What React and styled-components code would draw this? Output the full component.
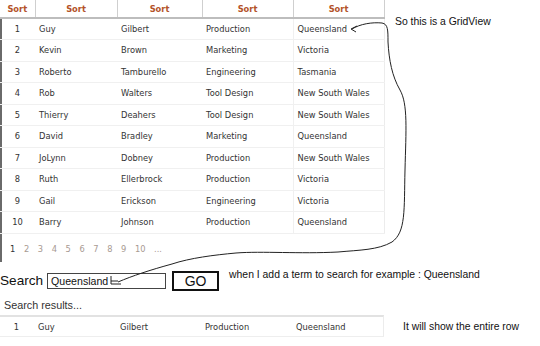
import styled, { createGlobalStyle } from "styled-components"

const GlobalStyle = createGlobalStyle`
  html, body {
    margin: 0;
    padding: 0;
    background: #fff;
  }
`

const people = [
  [1, "Guy", "Gilbert", "Production", "Queensland"],
  [2, "Kevin", "Brown", "Marketing", "Victoria"],
  [3, "Roberto", "Tamburello", "Engineering", "Tasmania"],
  [4, "Rob", "Walters", "Tool Design", "New South Wales"],
  [5, "Thierry", "Deahers", "Tool Design", "New South Wales"],
  [6, "David", "Bradley", "Marketing", "Queensland"],
  [7, "JoLynn", "Dobney", "Production", "New South Wales"],
  [8, "Ruth", "Ellerbrock", "Production", "Victoria"],
  [9, "Gail", "Erickson", "Engineering", "Victoria"],
  [10, "Barry", "Johnson", "Production", "Queensland"],
]

const colWidths = [35, 82, 85, 91, 91]

const App = () => {
  return (
    <Page>
      <GlobalStyle />
      <Top>
        <GridWrap>
          <Grid>
            <colgroup>
              {colWidths.map((w, i) => <col key={i} style={{ width: w }} />)}
            </colgroup>
            <thead>
              <tr>
                {colWidths.map((_, i) => <Th key={i}>Sort</Th>)}
              </tr>
            </thead>
            <tbody>
              {people.map(row => (
                <Row key={row[0]}>
                  {row.map((cell, i) => <Td key={i} $num={i === 0}>{cell}</Td>)}
                </Row>
              ))}
              <PagerRow>
                <td colSpan={5}>
                  <Pager>
                    {["1", "2", "3", "4", "5", "6", "7", "8", "9", "10", "..."].map((p, i) => (
                      <PageLink key={p} $current={i === 0}>{p}</PageLink>
                    ))}
                  </Pager>
                </td>
              </PagerRow>
            </tbody>
          </Grid>
        </GridWrap>
        <Note $top={16} $left={11}>So this is a GridView</Note>
      </Top>

      <SearchBar>
        <SearchLabel>Search</SearchLabel>
        <SearchInput>Queensland</SearchInput>
        <GoButton>GO</GoButton>
        <Note $top={0} $left={10}>when I add a term to search for example : Queensland</Note>
      </SearchBar>

      <ResultsTitle>Search results...</ResultsTitle>

      <Results>
        <ResultRow>
          {people[0].map((cell, i) => <ResultCell key={i} $w={colWidths[i]} $num={i === 0}>{cell}</ResultCell>)}
        </ResultRow>
        <Note $top={0} $left={19}>It will show the entire row</Note>
      </Results>

      <Scribble width="540" height="346" viewBox="0 0 540 346">
        <path
          d="M352 29 C360 24 372 22 382 23 C388 24 388 30 388 42 C389 60 392 76 400 90 C408 104 406 130 405 170 C404 210 406 232 392 242 C378 250 360 250 338 252 C300 254 262 251 236 253 C214 255 190 258 172 264 C150 270 132 276 118 282"
          fill="none"
          stroke="#222"
          strokeWidth="1"
        />
        <path d="M357 26 L351 29 L356 32" fill="none" stroke="#222" strokeWidth="1" />
        <path d="M111 276 L111 284 L121 284 M111 281 L118 281" fill="none" stroke="#222" strokeWidth="1" />
      </Scribble>
    </Page>
  )
}

const Page = styled.div`
  position: relative;
  width: 540px;
  height: 346px;
  overflow: hidden;
  font-family: "Liberation Sans", Arial, sans-serif;
`

const Top = styled.div`
  display: flex;
  align-items: flex-start;
`

const GridWrap = styled.div`
  width: 384px;
  border-left: 2px solid #6a6a6a;
  box-sizing: border-box;
`

const Grid = styled.table`
  width: 384px;
  margin-left: -2px;
  border-collapse: collapse;
  table-layout: fixed;
  font-family: "DejaVu Sans", Verdana, sans-serif;
  font-size: 8.3px;
  color: #333;
`

const Th = styled.th`
  height: 17px;
  padding: 0;
  font-weight: bold;
  color: #b4532a;
  text-align: center;
  background: #fff;
  border-right: 1px solid #cfcfcf;
  border-bottom: 2px solid #bdbdbd;
`

const Row = styled.tr`
  height: 21.5px;
`

const Td = styled.td`
  padding: 0 0 0 ${p => (p.$num ? 0 : 4)}px;
  text-align: ${p => (p.$num ? "center" : "left")};
  border-bottom: 1px solid #f0f0f0;
  white-space: nowrap;
  overflow: hidden;
  &:last-child {
    border-left: 1px solid #f0f0f0;
    border-right: 1px solid #ececec;
  }
`

const PagerRow = styled.tr`
  height: 29px;
  td {
    padding: 2px 0 0;
  }
`

const Pager = styled.div`
  display: flex;
  gap: 8.6px;
  padding-left: 10px;
`

const PageLink = styled.span`
  color: ${p => (p.$current ? "#333" : "#a89a92")};
`

const Note = styled.div`
  margin-left: ${p => p.$left}px;
  padding-top: ${p => p.$top}px;
  font-family: "Liberation Sans", Arial, sans-serif;
  font-size: 10.4px;
  color: #111;
  white-space: nowrap;
`

const SearchBar = styled.div`
  display: flex;
  align-items: flex-start;
  margin-top: 7px;
  height: 24px;
`

const SearchLabel = styled.div`
  font-size: 13.6px;
  line-height: 18px;
  margin-top: 3px;
  color: #111;
`

const SearchInput = styled.div`
  width: 119px;
  height: 16px;
  margin-left: 4px;
  margin-top: 4px;
  box-sizing: border-box;
  border: 1px solid #444;
  font-size: 10.6px;
  line-height: 14px;
  padding-left: 3px;
  color: #111;
`

const GoButton = styled.div`
  width: 47px;
  height: 20px;
  margin-left: 6px;
  margin-top: 2px;
  box-sizing: border-box;
  border: 2px solid #111;
  font-size: 14px;
  line-height: 16px;
  text-align: center;
  color: #111;
`

const ResultsTitle = styled.div`
  margin-top: 5px;
  padding-left: 4px;
  font-size: 10.8px;
  line-height: 14px;
  color: #333;
`

const Results = styled.div`
  display: flex;
  align-items: center;
  margin-top: 3px;
`

const ResultRow = styled.div`
  display: flex;
  align-items: center;
  width: 384px;
  height: 22px;
  border-top: 2px solid #e2e2e2;
  border-bottom: 1px solid #eeeeee;
  border-right: 1px solid #ececec;
  box-sizing: border-box;
  font-family: "DejaVu Sans", Verdana, sans-serif;
  font-size: 8.3px;
  color: #333;
`

const ResultCell = styled.div`
  width: ${p => p.$w}px;
  box-sizing: border-box;
  padding-left: ${p => (p.$num ? 0 : 5)}px;
  text-align: ${p => (p.$num ? "center" : "left")};
  white-space: nowrap;
  &:first-child {
    width: ${p => p.$w - 2}px;
  }
`

const Scribble = styled.svg`
  position: absolute;
  left: 0;
  top: 0;
  pointer-events: none;
`

export default App
